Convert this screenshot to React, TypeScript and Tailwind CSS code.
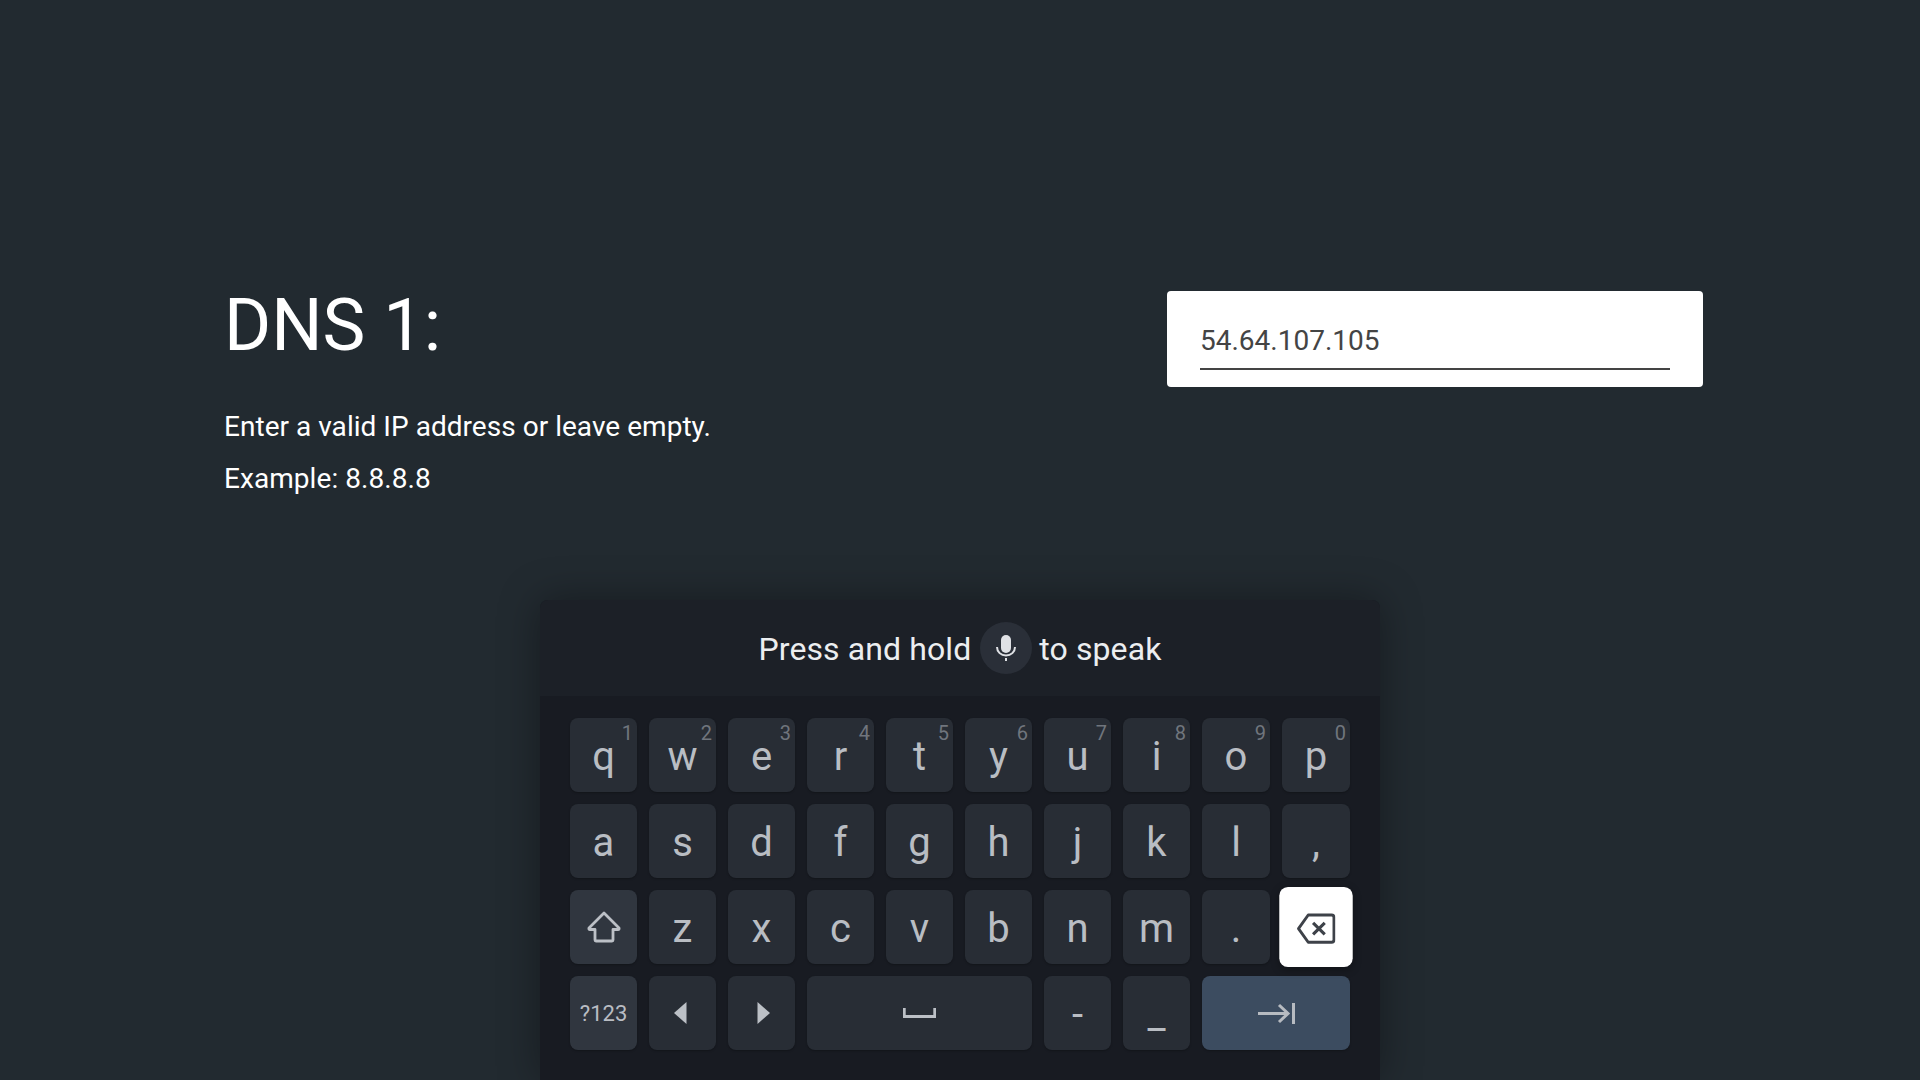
// App.tsx
const font = { fontFamily: "Roboto, sans-serif" };

// ── Key ───────────────────────────────────────────────────────────────────────
const Key = ({
  label,
  hint,
  tone = "bg-[#282d35]",
  size = "text-[40px]",
  className = "",
  children,
}: {
  label?: string;
  hint?: string;
  tone?: string;
  size?: string;
  className?: string;
  children?: React.ReactNode;
}) => (
  <div
    className={`relative h-[74px] flex items-center justify-center rounded-lg leading-[74px] whitespace-nowrap text-[#b9bdc3] shadow-[0_1px_2px_rgba(0,0,0,0.25)] ${tone} ${size} ${className}`}
  >
    {label && <span className="pt-[3px]">{label}</span>}
    {children}
    {hint && (
      <span className="absolute top-[8px] right-[4px] text-[20px] leading-[14px] text-[#70757d]">
        {hint}
      </span>
    )}
  </div>
);

// ── Icons ─────────────────────────────────────────────────────────────────────
const MicIcon = () => (
  <svg width="20" height="26" viewBox="0 0 20 26" fill="none">
    <rect x="5" y="0" width="10" height="18" rx="5" fill="#dfe1e5" />
    <path d="M1 12c0 5 4 8.500 9 8.500s9-3.500 9-8.500" stroke="#dfe1e5" strokeWidth="2" />
    <rect x="9" y="23" width="2" height="3" fill="#dfe1e5" />
  </svg>
);

const ShiftIcon = () => (
  <svg width="34" height="32" viewBox="0 0 34 32" fill="none">
    <path
      d="M17 2 L32 17 Q32.500 18.500 31 18.500 H26 V29 Q26 30 25 30 H9 Q8 30 8 29 V18.500 H3 Q1.500 18.500 2 17 Z"
      stroke="#bcc0c6"
      strokeWidth="2.800"
      strokeLinejoin="round"
    />
  </svg>
);

const LeftIcon = () => (
  <svg className="-ml-[5px]" width="13" height="22" viewBox="0 0 13 22">
    <path d="M12.500 0 V22 L0 11 Z" fill="#bcc0c6" />
  </svg>
);

const RightIcon = () => (
  <svg className="ml-[3px]" width="13" height="22" viewBox="0 0 13 22">
    <path d="M0.500 0 V22 L13 11 Z" fill="#bcc0c6" />
  </svg>
);

const SpaceIcon = () => (
  <svg width="33" height="10" viewBox="0 0 33 10" fill="none">
    <path d="M1.300 0 V8.500 H31.700 V0" stroke="#bcc0c6" strokeWidth="2.800" />
  </svg>
);

const TabIcon = () => (
  <svg width="37" height="21" viewBox="0 0 37 21" fill="none">
    <path
      d="M0 10.500 H30 M21 2 L30 10.500 L21 19 M35.500 0 V21"
      stroke="#b7bbc1"
      strokeWidth="3"
    />
  </svg>
);

const BackspaceIcon = () => (
  <svg className="mt-[2px]" width="36" height="29" viewBox="0 0 40 32" fill="none">
    <path
      d="M12 2 H36 Q38.500 2 38.500 4.500 V27.500 Q38.500 30 36 30 H12 L2 16 Z"
      stroke="#3e4249"
      strokeWidth="3"
      strokeLinejoin="round"
    />
    <path d="M17 10 L29 22 M29 10 L17 22" stroke="#3e4249" strokeWidth="3.200" />
  </svg>
);

// ── Keyboard ──────────────────────────────────────────────────────────────────
const row1 = [
  ["q", "1"],
  ["w", "2"],
  ["e", "3"],
  ["r", "4"],
  ["t", "5"],
  ["y", "6"],
  ["u", "7"],
  ["i", "8"],
  ["o", "9"],
  ["p", "0"],
];
const row2 = ["a", "s", "d", "f", "g", "h", "j", "k", "l", ","];
const row3 = ["z", "x", "c", "v", "b", "n", "m", "."];

const Keyboard = () => (
  <div className="w-[840px] mx-auto mt-[95px] rounded-t-lg bg-[#181b22] shadow-[0_0_40px_rgba(0,0,0,0.35)]">
    {/* Voice hint */}
    <div className="h-[96px] pt-px flex items-center justify-center rounded-t-lg bg-[#1c2027] text-[32px] tracking-[0.1px] text-[#eceef0]">
      <span>Press and hold</span>
      <span className="w-[52px] h-[52px] ml-[9px] mr-[7px] -mt-px flex items-center justify-center rounded-full bg-[#2a2f38]">
        <MicIcon />
      </span>
      <span>to speak</span>
    </div>

    {/* Keys */}
    <div className="grid grid-cols-[repeat(8,67px)_68px_68px] gap-[12px] px-[30px] pt-[22px] pb-[30px]">
      {row1.map(([k, n]) => (
        <Key key={k} label={k} hint={n} />
      ))}
      {row2.map((k) => (
        <Key key={k} label={k} />
      ))}
      <Key tone="bg-[#30363f]">
        <ShiftIcon />
      </Key>
      {row3.map((k) => (
        <Key key={k} label={k} />
      ))}
      <Key tone="bg-white" className="scale-[1.08] z-10 shadow-[0_2px_8px_rgba(0,0,0,0.3)]">
        <BackspaceIcon />
      </Key>
      <Key tone="bg-[#30363f]" size="text-[22px]">
        <span className="pt-[2px]">?123</span>
      </Key>
      <Key>
        <LeftIcon />
      </Key>
      <Key>
        <RightIcon />
      </Key>
      <Key className="col-span-3">
        <SpaceIcon />
      </Key>
      <Key label="-" />
      <Key label="_" />
      <Key tone="bg-[#3c4c60]" className="col-span-2">
        <TabIcon />
      </Key>
    </div>
  </div>
);

// ── Main ──────────────────────────────────────────────────────────────────────
const App = () => (
  <div className="h-screen overflow-hidden bg-[#222a30] pt-[290px]" style={font}>
    <div className="flex justify-between pl-[224px] pr-[217px]">
      <div className="text-white">
        <h1 className="text-[72px] leading-[72px] font-normal">DNS 1:</h1>
        <p className="mt-[39px] text-[28px] leading-[52px] tracking-[0.03px]">
          Enter a valid IP address or leave empty.
        </p>
        <p className="text-[28px] leading-[52px] tracking-[0.06px]">Example: 8.8.8.8</p>
      </div>

      <div className="w-[536px] h-[96px] mt-px px-[33px] pt-[30px] rounded bg-white">
        <div className="h-[49px] border-b-2 border-[#444444] text-[28px] leading-[40px] text-[#444444]">
          54.64.107.105
        </div>
      </div>
    </div>

    <Keyboard />
  </div>
);

export default App;
